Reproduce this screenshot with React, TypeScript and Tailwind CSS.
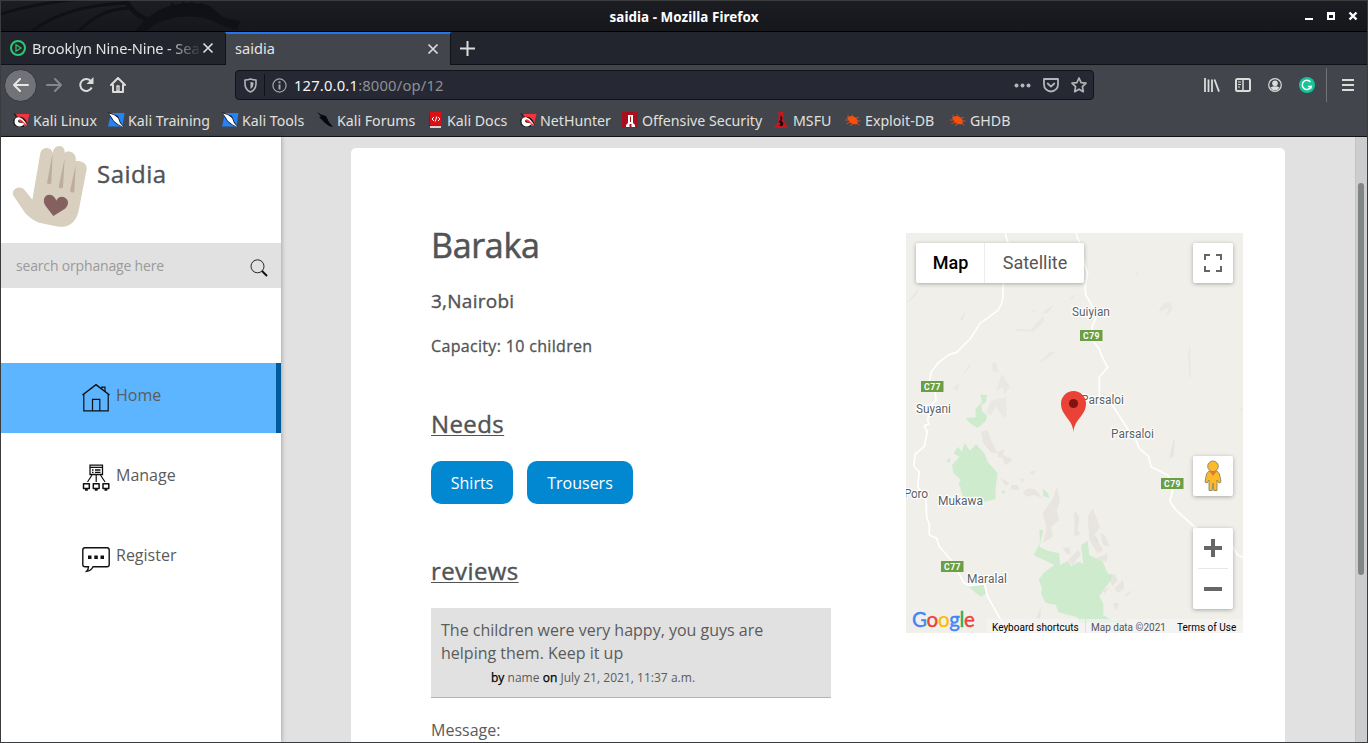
import React from "react";

function Dragon() {
  return (
    <svg className="absolute left-0 top-0" width="260" height="30" viewBox="0 0 260 30" fill="none">
      <g stroke="#101116" strokeWidth="3">
        <path d="M0 13C28 4 60 0 80 -2" />
        <path d="M31 30C55 12 85 4 125 2" />
        <path d="M78 30C92 16 106 8 128 7" />
      </g>
      <path d="M122 0H128C134 9 140 15 148 16C160 6 172 3 186 2L203 3C212 5 216 12 224 17L239 20L236 29L222 25L212 20C194 12 162 14 145 30H134L143 20C134 16 128 9 122 0Z" fill="#101116" />
      <path d="M170 2L179 9M181 1L188 7M190 1L197 7M200 2L208 9" stroke="#101116" strokeWidth="2" />
    </svg>
  );
}

function KaliIcon({ kind }: { kind: string }) {
  if (kind === "red")
    return (
      <svg width="17" height="16" viewBox="0 0 17 16">
        <path d="M3 2H16.500L13.500 14H3Z" fill="#f4343c" />
        <path d="M0 1L4 3L3 4L6 5C10 4 14 8 14.500 13L11 9C8 6 5 7 6 9L11 12V15H4L1 13L0 8L3 5Z" fill="#1b1c20" />
        <path d="M1.500 9.500C2 3.500 9 3.500 14 13L10 9.500C7 5.500 3.500 8.500 6 10.500L11.500 11.500C10 14.500 6 15.500 3.500 13.500Q1.500 12 1.500 9.500Z" fill="#fff" />
      </svg>
    );
  if (kind === "blue")
    return (
      <svg width="17" height="16" viewBox="0 0 17 16">
        <path d="M3 1H16.500L14.500 14.500H0L2 6Z" fill="#2583f5" />
        <path d="M0 0L5 2L10 4L12.500 10L16 15L11 13.500L6 10L3 6Z" fill="#17181c" />
        <path d="M1 1.500L6 3L10 6L12 11L15.500 15L10.500 12.500L6 9L3.500 5Z" fill="#fff" />
      </svg>
    );
  if (kind === "black")
    return (
      <svg width="17" height="16" viewBox="0 0 17 16">
        <path d="M0 0L4 2.500L9 4L10.500 7L12 10L16 15L12 14L8 11L5 8L2 5L4 4.500Z" fill="#08090a" />
      </svg>
    );
  if (kind === "docs")
    return (
      <svg width="14" height="16" viewBox="0 0 14 16">
        <path d="M0 2L2 0V14H0Z" fill="#233667" />
        <path d="M1 0H12V13H1Z" fill="#d91017" />
        <path d="M1 14H12V16H1Z" fill="#d8d4d2" />
        <path d="M5 5L3 7L5 9M9 5L11 7L9 9M7.700 4.500L6.300 9.500" stroke="#fff" fill="none" />
      </svg>
    );
  if (kind === "offsec")
    return (
      <svg width="16" height="16" viewBox="0 0 16 16">
        <path d="M0 0H16V16H0Z" fill="#a90f1d" />
        <path d="M6 3H11V11L13 13V15H9.500V12H7.500V15H4V13L6 11Z" fill="#fff" />
        <path d="M8 4.500H9V10H8Z" fill="#a90f1d" />
      </svg>
    );
  if (kind === "msfu")
    return (
      <svg className="-ml-px" width="15" height="16" viewBox="0 0 14 16">
        <path d="M4 0H9V8L13 15V16H0V15L4 9Z" fill="#c41820" />
        <path d="M6 3L8 6L7 9L9 11L8 14H5L6 11L4 10L6 8Z" fill="#23090c" />
      </svg>
    );
  return (
    <svg width="16" height="16" viewBox="0 0 16 16">
      <path d="M2 5L4 4.500L7 4Q11 4.500 13 9L12 12Q8 13 5 10.500Q3 8.500 2 5Z" fill="#fa4f0b" />
      <path d="M4 4.500L2.500 3M8 4L7 2.500M11 6L14 5.500M13 9L15.500 9M12 11L14 13.500M8 12L5 13.500M5 10.500L1.500 11.500M3 8L0 8" stroke="#e0501b" strokeWidth="0.900" />
    </svg>
  );
}

const bookmarks = [
  { t: "Kali Linux", k: "red", w: "w-[95px]", g: "gap-[3px]" },
  { t: "Kali Training", k: "blue", w: "w-[114px]", g: "gap-[3px]" },
  { t: "Kali Tools", k: "blue", w: "w-[95px]", g: "gap-[3px]" },
  { t: "Kali Forums", k: "black", w: "w-[112px]", g: "gap-[3px]" },
  { t: "Kali Docs", k: "docs", w: "w-[91px]", g: "gap-[4px]" },
  { t: "NetHunter", k: "red", w: "w-[102px]", g: "gap-[3px]" },
  { t: "Offensive Security", k: "offsec", w: "w-[153px]", g: "gap-[4px]" },
  { t: "MSFU", k: "msfu", w: "w-[70px]", g: "gap-[4px]" },
  { t: "Exploit-DB", k: "bug", w: "w-[105px]", g: "gap-[4px]" },
  { t: "GHDB", k: "bug", w: "w-[80px]", g: "gap-[4px]" },
];

function Cross() {
  return (
    <svg width="12" height="12" viewBox="0 0 12 12" stroke="#dcdcda" strokeWidth="1.700" fill="none">
      <path d="M1.500 1.500L10.500 10.500M10.500 1.500L1.500 10.500" />
    </svg>
  );
}

function TitleBar() {
  return (
    <div className="relative flex h-[31px] items-center justify-center border-b border-black bg-gradient-to-b from-[#1c1d23] to-[#16171b]">
      <Dragon />
      <span className="relative pt-[3px] text-[13.4px] font-bold tracking-[0.06px] text-white">saidia - Mozilla Firefox</span>
      <svg className="absolute right-[9px] top-[10px]" width="54" height="12" viewBox="0 0 54 12">
        <path d="M1 7H9V9H1Z" fill="#fff" />
        <path d="M23 1H31V9H23ZM25 4V7H29V4Z" fill="#fff" fillRule="evenodd" />
        <path d="M45.500 1.500L52.500 8.500M52.500 1.500L45.500 8.500" stroke="#fff" strokeWidth="2.400" />
      </svg>
    </div>
  );
}

function TabBar() {
  return (
    <div className="flex h-[33px] bg-[#23252e] text-[14.6px] text-[#e4e4e2]">
      <div className="flex w-[224px] items-center border-b border-[#111217] pl-[9px]">
        <svg width="16" height="16" viewBox="0 0 16 16" fill="none" stroke="#2dc96f">
          <circle cx="8" cy="8" r="7" strokeWidth="2" />
          <path d="M6 4.800L11 8L6 11.200Z" strokeWidth="1.200" />
        </svg>
        <span className="ml-[6px] w-[167px] overflow-hidden whitespace-nowrap pt-px tracking-[-0.12px] [mask-image:linear-gradient(to_right,black_134px,transparent_170px)]">Brooklyn Nine-Nine - Sea</span>
        <span className="ml-[3px]"><Cross /></span>
      </div>
      <div className="flex w-[226px] items-center justify-between border-x border-t-2 border-x-[#111217] border-t-[#2277ee] bg-[#42454c] pb-px pl-[9px] pr-[11px]">
        <span>saidia</span>
        <Cross />
      </div>
      <div className="flex flex-1 items-center border-b border-[#111217] pl-[9px]">
        <svg width="15" height="15" viewBox="0 0 15 15" stroke="#dcdcda" strokeWidth="2"><path d="M7.500 0V15M0 7.500H15" /></svg>
      </div>
    </div>
  );
}

function NavBar() {
  return (
    <div className="flex h-[40px] items-center bg-[#42454c] text-[#dcdcda]">
      <div className="ml-[3px] flex size-[33px] items-center justify-center rounded-full border border-[#33353b] bg-[#727378]">
        <svg width="16" height="14" viewBox="0 0 16 14" fill="none" stroke="#e6e6e4" strokeWidth="2" strokeLinecap="round" strokeLinejoin="round"><path d="M15 7H1.500M7 1L1 7L7 13" /></svg>
      </div>
      <svg className="ml-[9px]" width="16" height="14" viewBox="0 0 16 14" fill="none" stroke="#85878a" strokeWidth="2" strokeLinecap="round" strokeLinejoin="round"><path d="M1 7H14.500M9 1L15 7L9 13" /></svg>
      <svg className="ml-[16px]" width="16" height="16" viewBox="0 0 16 16" fill="none" stroke="#dcdcda" strokeWidth="2"><path d="M13 4.200A6 6 0 1 0 13.700 10.500" /><path d="M15.500 0V7H8.500Z" fill="#dcdcda" stroke="none" /></svg>
      <svg className="ml-[16px]" width="16" height="16" viewBox="0 0 16 16" fill="none" stroke="#dcdcda" strokeWidth="2" strokeLinejoin="round" strokeLinecap="round"><path d="M1 8L8 1L15 8M3 8V15H13V8" /><path d="M7 9H9V14H7Z" strokeWidth="1.400" /></svg>
      <div className="ml-[109px] flex h-[30px] w-[859px] items-center rounded-[4px] border border-[#111319] bg-[#262933] text-[#b4b5b8]">
        <svg className="ml-[8px]" width="13" height="15" viewBox="0 0 13 15" fill="none" stroke="#b4b5b8"><path d="M1 2Q4 2 6.500 1Q9 2 12 2V6Q12 11.500 6.500 14Q1 11.500 1 6Z" strokeWidth="1.600" strokeLinejoin="round" /><path d="M6.500 3.800Q8 4.500 9.500 4.600V6.500Q9.300 9.500 6.500 11.300Z" fill="#b4b5b8" stroke="none" /></svg>
        <div className="ml-[7px] h-[22px] w-px bg-[#111319]" />
        <svg className="ml-[7px]" width="15" height="15" viewBox="0 0 15 15" fill="none" stroke="#a4a5a9"><circle cx="7.500" cy="7.500" r="6.600" strokeWidth="1.200" /><path d="M7.500 6.500V11.500M7.500 3.200V5.200" strokeWidth="2" /></svg>
        <span className="ml-[7px] flex-1 pt-px text-[14.8px] tracking-[0.16px] text-[#8e8f95]"><span className="text-[#f4f4f4]">127.0.0.1</span>:8000/op/12</span>
        <svg width="17" height="5" viewBox="0 0 17 5" fill="#b4b5b8"><circle cx="2.500" cy="2.500" r="2" /><circle cx="8.500" cy="2.500" r="2" /><circle cx="14.500" cy="2.500" r="2" /></svg>
        <svg className="ml-[12px]" width="16" height="15" viewBox="0 0 16 15" fill="none" stroke="#b4b5b8" strokeWidth="1.800" strokeLinejoin="round" strokeLinecap="round"><path d="M1 1H15V6.500A7 7 0 0 1 1 6.500Z" /><path d="M4.700 5.500L8 8.600L11.300 5.500" /></svg>
        <svg className="ml-[12px] mr-[6px]" width="16" height="16" viewBox="0 0 16 16" fill="none" stroke="#b4b5b8" strokeWidth="1.700" strokeLinejoin="round"><path d="M8 1L10.100 5.600L15 6.200L11.400 9.600L12.300 14.700L8 12.200L3.700 14.700L4.600 9.600L1 6.200L5.900 5.600Z" /></svg>
      </div>
      <svg className="ml-[110px]" width="16" height="14" viewBox="0 0 16 14" stroke="#dcdcda"><path d="M1 0V14M4.500 1.500V14M8 1.500V14" strokeWidth="1.800" /><path d="M10.500 1.500L15 13.600" strokeWidth="1.800" /></svg>
      <svg className="ml-[15px]" width="16" height="14" viewBox="0 0 16 14" fill="none" stroke="#dcdcda"><rect x="1" y="1" width="14" height="12" rx="1.500" strokeWidth="2" /><path d="M8 1V13" strokeWidth="1.500" /><path d="M3 4H6M3 6.500H6M3 9H5" strokeWidth="1" /></svg>
      <svg className="ml-[17px]" width="14" height="14" viewBox="0 0 14 14"><circle cx="7" cy="7" r="6.300" fill="none" stroke="#dcdcda" strokeWidth="1.200" /><circle cx="7" cy="5.300" r="2.800" fill="#dcdcda" /><path d="M2.400 9.600Q7 7 11.600 9.600Q10 12.300 7 12.300Q4 12.300 2.400 9.600Z" fill="#dcdcda" /></svg>
      <svg className="ml-[17px]" width="16" height="16" viewBox="0 0 16 16"><circle cx="8" cy="8" r="8" fill="#16c39a" /><path d="M11.500 5A4.600 4.600 0 1 0 12.200 9.500H9" fill="none" stroke="#fff" strokeWidth="1.500" /><path d="M12.500 8.500V12L10.300 10" fill="#fff" /></svg>
      <div className="ml-[11px] h-[34px] w-px bg-[#707277]" />
      <svg className="ml-[15px]" width="12" height="12" viewBox="0 0 12 12" stroke="#dcdcda" strokeWidth="2"><path d="M0 1H12M0 6H12M0 11H12" /></svg>
    </div>
  );
}

function BookmarkBar() {
  return (
    <div className="flex h-[31px] items-center bg-[#42454c] pl-[12px] text-[14.2px] text-[#e0e0de]">
      {bookmarks.map((b) => (
        <div key={b.t} className={`flex shrink-0 items-center whitespace-nowrap ${b.w} ${b.g}`}>
          <KaliIcon kind={b.k} />
          <span>{b.t}</span>
        </div>
      ))}
    </div>
  );
}

function Hand() {
  return (
    <svg className="-mt-px ml-[10px]" width="78" height="84" viewBox="33 25 234 252">
      <path d="M39 178C35 158 60 148 73 162L97 192L121 52C126 30 158 33 158 55C158 25 196 22 194 52C205 42 231 50 227 76C241 74 262 80 260 101L236 225C228 262 205 276 175 273L125 263C100 257 85 243 74 230Z" fill="#d8cfbf" />
      <path d="M158 53L154 142Q148 150 141 142ZM194 68L189 155Q183 162 176 154ZM227 88L223 168Q217 174 210 166Z" fill="#bdaca0" />
      <path d="M160 241L137 211C126 194 133 178 148 177C160 176 168 190 169 195C173 186 184 180 195 186C207 193 207 208 195 219Z" fill="#84605f" />
    </svg>
  );
}

function HomeIcon() {
  return (
    <svg width="30" height="30" viewBox="0 0 30 30" fill="none" stroke="#0b1015" strokeWidth="1.200">
      <path d="M1.500 12L15 1.700L28.500 12" strokeWidth="1.500" />
      <path d="M2.800 11V27.800H27.200V11M11.500 27.500V16.300H18.800V27.500M20.800 5.500V4.200H24V8.500" />
    </svg>
  );
}

function ManageIcon() {
  return (
    <svg width="30" height="30" viewBox="0 0 30 30" fill="none" stroke="#111" strokeWidth="1.300">
      <path d="M9 2.200H21.500V11.500H9ZM9 4.300H21.500M11 7H12.500M14 7H19.500M11 9.300H12.500M14 9.300H19.500" />
      <path d="M11 12L6.500 19M15.200 12V19M19.500 12L24 19" strokeWidth="1.200" />
      <path d="M2.500 20.800H8.300V25.500H2.500ZM12.300 20.800H18.100V25.500H12.300ZM22 20.800H27.800V25.500H22ZM4 27H6.800M13.800 27H16.600M23.500 27H26.300" strokeWidth="1.500" strokeLinejoin="round" />
    </svg>
  );
}

function RegisterIcon() {
  return (
    <svg width="30" height="30" viewBox="0 0 30 30" fill="none" stroke="#111" strokeWidth="1.400">
      <path d="M4 4.700H26Q28.200 4.700 28.200 6.900V21.500Q28.200 23.700 26 23.700H12Q10 28 5.500 28.400Q7.500 26.500 7.500 23.700H4Q1.800 23.700 1.800 21.500V6.900Q1.800 4.700 4 4.700Z" />
      <path d="M7 12.500H10.500V16H7ZM13.300 12.500H16.800V16H13.300ZM19.500 12.500H23V16H19.500Z" fill="#111" stroke="none" />
    </svg>
  );
}

function Sidebar() {
  return (
    <aside className="relative w-[280px] shrink-0 bg-white text-[#515354] shadow-[1px_0_4px_rgba(0,0,0,0.25)]">
      <div className="flex h-[106px] pt-[8px]">
        <Hand />
        <h1 className="ml-[8px] mt-[12px] text-[24px] leading-[34px] tracking-[0.5px] [-webkit-text-stroke:0.4px_#515354]">Saidia</h1>
      </div>
      <div className="flex h-[45px] items-center justify-between bg-[#e1e1e1] pl-[15px] pr-[12px]">
        <span className="text-[14px] tracking-[-0.17px] text-[#9a9a9a]">search orphanage here</span>
        <svg className="mt-[4px]" width="20" height="20" viewBox="0 0 20 20" fill="none" stroke="#111"><circle cx="8.500" cy="8.300" r="6.500" strokeWidth="0.900" /><path d="M13 13L18 18" strokeWidth="2" /></svg>
      </div>
      <nav className="mt-[75px] text-[16px] text-[#5b5b5b]">
        <div className="flex h-[70px] border-r-[5px] border-[#015a9c] bg-[#5eb5ff] pl-[80px] pt-[20px]">
          <HomeIcon /><span className="ml-[5px]">Home</span>
        </div>
        <div className="mt-[10px] flex h-[70px] pl-[80px] pt-[20px]">
          <ManageIcon /><span className="ml-[5px]">Manage</span>
        </div>
        <div className="mt-[10px] flex h-[70px] pl-[80px] pt-[20px]">
          <RegisterIcon /><span className="ml-[5px]">Register</span>
        </div>
      </nav>
    </aside>
  );
}

const places = [
  { t: "Suiyian", x: 166, y: 82.5, w: 38 },
  { t: "Parsaloi", x: 175, y: 170.5, w: 43 },
  { t: "Parsaloi", x: 205, y: 204.5, w: 43 },
  { t: "Suyani", x: 10, y: 179.5, w: 35 },
  { t: "Poro", x: -2, y: 264.5, w: 24 },
  { t: "Mukawa", x: 32, y: 271.5, w: 45 },
  { t: "Maralal", x: 61, y: 349.5, w: 40 },
];

const badges = [
  { t: "C79", x: 174, y: 97 },
  { t: "C77", x: 15, y: 148 },
  { t: "C79", x: 255, y: 245 },
  { t: "C77", x: 35, y: 328 },
];

const letters = [
  { c: "G", k: "text-[#4285f4]" },
  { c: "o", k: "text-[#ea4335]" },
  { c: "o", k: "text-[#fbbc05]" },
  { c: "g", k: "text-[#4285f4]" },
  { c: "l", k: "text-[#34a853]" },
  { c: "e", k: "text-[#ea4335]" },
];

function MapCanvas() {
  return (
    <svg className="absolute inset-0" width="337" height="400" viewBox="0 0 337 400" fontFamily="Roboto, sans-serif">
      <rect width="337" height="400" fill="#f0efea" />
      <g transform="translate(-10 -9) scale(0.33333)">
        <g fill="#e9e8e3">
          <path d="M357 314L405 317L442 275L446 290L410 324L365 320ZM405 262L420 254L415 264ZM435 268L474 242L455 268ZM520 226L540 207L530 225ZM430 415L460 385L480 383L440 412ZM788 265L800 238L825 235L828 260L810 275L820 250L795 262ZM716 158L724 140L726 150ZM876 390L882 360L885 460L880 460ZM200 455L220 420L224 428ZM288 420L300 415L308 445L290 440ZM300 500L318 450L342 490L325 510L320 490ZM285 530L330 520L332 575L320 580L300 545L285 575L270 565ZM170 495L190 475L185 500ZM30 240L70 190L60 215ZM190 290L208 260L202 288ZM1030 560L1040 545V560Z" />
        </g>
        <path d="M253 512L273 512L270 535L256 542L258 560L273 575L270 590L245 612L225 600L208 582L240 580L238 555L258 535Z" fill="#ceeccd" />
        <g fill="none" stroke="#fff" strokeWidth="5" strokeLinejoin="round">
          <path d="M328 27L333 50L345 70L335 110L322 178L320 225Q318 240 305 260L252 298L222 345L182 385L160 392L128 415L105 445L100 475L118 505L120 530L102 545L95 590L100 600L85 605L95 630" />
          <path d="M540 27L550 55L560 100L575 150L567 190L570 215L585 240L600 280L588 310L592 352L610 375L617 395L635 430L610 460V515L640 530L660 560L695 615L715 645" />
        </g>
      </g>
      <g transform="translate(-10 197) scale(0.33333)">
        <path d="M255 5L275 0L285 30L305 70L285 68L262 40ZM305 65L325 58L322 75L350 90L328 106L320 85L305 80ZM440 250L472 205L482 170L492 215L482 240L490 270L465 290L470 320L440 340L452 295ZM535 240L550 262L545 300L555 312L535 320ZM500 355L520 350L525 375L510 370ZM515 392L545 360L555 372L530 405ZM575 260L590 235L612 290L595 315L622 362L605 370L580 330ZM612 308L630 320L640 350L622 345ZM600 385L635 370L632 395L612 392ZM640 450L655 430L665 450L650 470ZM655 475L680 450L685 475L665 490ZM620 480L640 470L625 492ZM685 495L710 480L695 498ZM650 520L670 518L660 542ZM310 140L340 160L330 168ZM345 165L365 165L370 180L345 178ZM380 185L400 175L420 180L440 205L415 195L390 200ZM372 145L385 148L378 158ZM400 125L418 122L410 135ZM420 565L436 530L432 565ZM820 85L832 30L837 30L832 80Z" fill="#e8e5df" />
        <g fill="#ceeccd">
          <path d="M168 105L190 80L173 70L185 50L198 65L206 38L222 62L240 43L265 70L275 95L305 130L300 165L298 208L265 215L200 198L188 160L195 150L172 128ZM151 94L160 83L163 98ZM440 175L455 190L462 204L442 198ZM318 178L330 190L318 190ZM597 318L606 330L600 338Z" />
          <path d="M430 300L442 300L430 350L455 362L490 370L492 405L515 393L525 408L548 395L562 402L555 345L575 333L580 375L620 395L635 430L652 435L640 458L622 480L610 500L622 520L622 555L645 570L690 567V578H550L545 562L487 547L480 525L448 518L435 490L438 475L428 450L442 430L475 405L413 375L432 340ZM215 467L265 460L272 490L255 500L240 490Z" />
        </g>
        <g fill="none" stroke="#fff" strokeWidth="5" strokeLinejoin="round">
          <path d="M95 0L85 50L58 72L53 108L70 125L65 170L90 210L92 260L100 285L100 315L122 325L130 350L165 390L205 460L220 467L265 462L275 500L320 580" />
          <path d="M708 0L718 25L730 55L758 80L765 110L815 135L830 160L828 190L822 210Q825 225 845 245L895 290L1010 350L1025 375L1045 384" />
        </g>
      </g>
      {places.map((p, i) => (
        <text key={i} x={p.x} y={p.y} textLength={p.w} fontSize="12" fill="#5c6064" stroke="#fff" strokeWidth="2.400" strokeLinejoin="round" paintOrder="stroke">{p.t}</text>
      ))}
      {badges.map((b, i) => (
        <g key={i}>
          <rect x={b.x} y={b.y} width="22.500" height="11" fill="#6b9f46" />
          <text x={b.x + 3} y={b.y + 9} textLength="16.500" fontSize="8.600" fontWeight="700" fill="#fff">{b.t}</text>
        </g>
      ))}
      <path d="M167.500 199.500C167 186 155 183 155 170.500A12.500 12.500 0 0 1 180 170.500C180 183 168 186 167.500 199.500Z" fill="#ea4335" />
      <circle cx="167.500" cy="170.500" r="4.600" fill="#811411" />
    </svg>
  );
}

function MapView() {
  return (
    <div className="relative h-[400px] w-[337px] overflow-hidden font-[Roboto,sans-serif]">
      <MapCanvas />
      <div className="absolute left-[10px] top-[10px] flex h-[40px] rounded-[2px] bg-white text-[18px] leading-[40px] shadow-[0_1px_4px_rgba(0,0,0,0.3)]">
        <span className="w-[69px] border-r border-[#ececec] pl-px text-center font-medium text-black">Map</span>
        <span className="w-[99px] pl-px text-center text-[#565656]">Satellite</span>
      </div>
      <div className="absolute right-[10px] top-[10px] flex size-[40px] items-center justify-center rounded-[2px] bg-white shadow-[0_1px_4px_rgba(0,0,0,0.3)]">
        <svg width="18" height="18" viewBox="0 0 18 18" fill="none" stroke="#666" strokeWidth="2"><path d="M1 6V1H6M12 1H17V6M17 12V17H12M6 17H1V12" /></svg>
      </div>
      <div className="absolute right-[10px] top-[223px] flex size-[40px] items-center justify-center rounded-[2px] bg-white shadow-[0_1px_4px_rgba(0,0,0,0.3)]">
        <svg width="18" height="32" viewBox="0 0 18 32"><g fill="#fdb92c" stroke="#8b8462" strokeWidth="0.900"><path d="M5 11H13L15.500 14L17 22L15 23L13 20V30.500H9.800L9 23L8.200 30.500H5V20L3 23L1 22L2.500 14Z" /><circle cx="9" cy="6.300" r="5.300" /></g><path d="M5.500 11.500H12.500L9 16Z" fill="#e07c2b" /></svg>
      </div>
      <div className="absolute right-[10px] top-[295px] flex h-[81px] w-[40px] flex-col items-center rounded-[2px] bg-white shadow-[0_1px_4px_rgba(0,0,0,0.3)]">
        <svg className="my-[11px]" width="18" height="18" viewBox="0 0 18 18"><path d="M7 0H11V7H18V11H11V18H7V11H0V7H7Z" fill="#666" /></svg>
        <div className="h-px w-[30px] bg-[#e6e6e6]" />
        <div className="mt-[18px] h-[4px] w-[18px] bg-[#666]" />
      </div>
      <div className="absolute bottom-[2px] left-[6px] font-[Lato,sans-serif] text-[20.5px] leading-[24px] tracking-[-0.3px] [-webkit-text-stroke:0.45px_currentColor] [text-shadow:0_0_2px_white]">
        {letters.map((l, i) => <span key={i} className={l.k}>{l.c}</span>)}
      </div>
      <div className="absolute bottom-0 right-0 flex h-[14px] w-[256px] items-center whitespace-nowrap bg-[#f5f5f5]/70 pl-[5px] text-[10px] leading-[14px] text-black">
        <span className="w-[93px] pt-[3px]">Keyboard shortcuts</span>
        <span className="w-px self-stretch bg-[#d4e8d4]" />
        <span className="w-[91px] pl-[5px] pt-[3px] text-[#555]">Map data ©2021</span>
        <span className="pt-[3px]">Terms of Use</span>
      </div>
    </div>
  );
}

function Orphanage() {
  return (
    <article className="w-[400px] text-[#515354]">
      <h2 className="text-[34px] leading-[42px] tracking-[-0.3px] [-webkit-text-stroke:0.55px_#515354]">Baraka</h2>
      <p className="mt-[22px] text-[19px] leading-[26px] tracking-[0.25px] [-webkit-text-stroke:0.35px_#515354]">3,Nairobi</p>
      <p className="mt-[20px] text-[16px] leading-[24px] tracking-[0.33px] [-webkit-text-stroke:0.3px_#515354]">Capacity: 10 children</p>
      <h3 className="mt-[49px] text-[24px] leading-[34px] tracking-[0.4px] underline decoration-1 underline-offset-[2px] [-webkit-text-stroke:0.4px_#515354]">Needs</h3>
      <div className="mt-[20px] flex gap-[14px] text-[16px] text-white">
        <div className="flex h-[43px] w-[82px] items-center justify-center rounded-[10px] bg-[#0288d1]">Shirts</div>
        <div className="flex h-[43px] w-[106px] items-center justify-center rounded-[10px] bg-[#0288d1]">Trousers</div>
      </div>
      <h3 className="mt-[50px] text-[24px] leading-[34px] tracking-[0.4px] underline decoration-1 underline-offset-[2px] [-webkit-text-stroke:0.4px_#515354]">reviews</h3>
      <div className="mt-[20px] h-[90px] border-b border-[#b4b4b4] bg-[#e1e1e1] pl-[10px] pt-[11px] text-[#5b5b5b]">
        <p className="w-[350px] text-[16px] leading-[23px]">The children were very happy, you guys are helping them. Keep it up</p>
        <p className="ml-[50px] mt-[5px] text-[12px] leading-[16px] tracking-[0.02px]"><span className="text-black [-webkit-text-stroke:0.25px_black]">by</span> name <span className="text-black [-webkit-text-stroke:0.25px_black]">on</span> July 21, 2021, 11:37 a.m.</p>
      </div>
      <p className="mt-[20px] text-[16px] leading-[24px] text-[#5b5b5b]">Message:</p>
    </article>
  );
}

export default function App() {
  return (
    <div className="flex h-[743px] w-[1368px] flex-col overflow-hidden border border-[#3a3c3e] font-['Noto_Sans',sans-serif]">
      <TitleBar />
      <TabBar />
      <NavBar />
      <BookmarkBar />
      <div className="flex min-h-0 flex-1 border-t border-[#111217] bg-[#e1e1e1] font-['Open_Sans','Noto_Sans',sans-serif]">
        <Sidebar />
        <main className="flex flex-1 pl-[70px] pt-[11px]">
          <section className="flex h-[700px] w-[934px] rounded-t-[5px] bg-white pl-[80px]">
            <div className="pt-[76px]"><Orphanage /></div>
            <div className="ml-[75px] pt-[85px]"><MapView /></div>
          </section>
        </main>
        <div className="w-[12px] border-l border-[#c4c4c4] bg-[#cdcdcd] pl-[2px] pt-[46px]">
          <div className="h-[392px] w-[6px] rounded-full bg-[#7f8484]" />
        </div>
      </div>
    </div>
  );
}
